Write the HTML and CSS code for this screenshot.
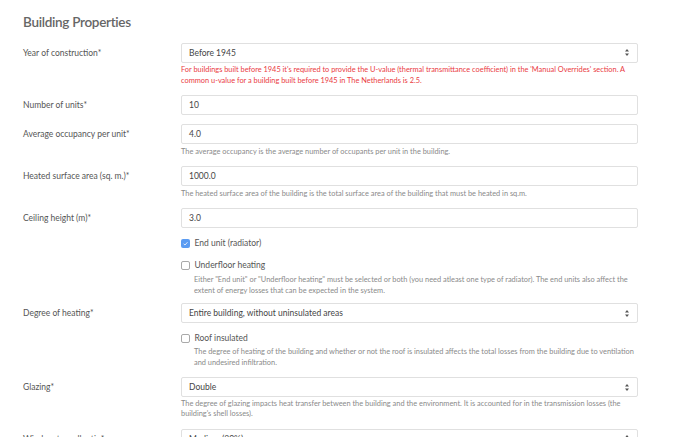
FILE: index.html
```html
<!DOCTYPE html>
<html lang="en">
<head>
<meta charset="utf-8">
<title>Building Properties</title>
<link rel="stylesheet" href="styles.css">
</head>
<body>
<main class="page">
  <h2 class="title">Building Properties</h2>

  <div class="row">
    <label class="label">Year of construction*</label>
    <div class="control">
      <div class="field select"><span>Before 1945</span><svg class="arrows" viewBox="0 0 4 7" width="4" height="7"><path d="M2 0 L4 2.6 L0 2.6 Z M2 7 L4 4.4 L0 4.4 Z"/></svg></div>
      <p class="help error">For buildings built before 1945 it's required to provide the U-value (thermal transmittance coefficient) in the 'Manual Overrides' section. A common u-value for a building built before 1945 in The Netherlands is 2.5.</p>
    </div>
  </div>

  <div class="row">
    <label class="label">Number of units*</label>
    <div class="control">
      <div class="field"><span>10</span></div>
    </div>
  </div>

  <div class="row">
    <label class="label">Average occupancy per unit*</label>
    <div class="control">
      <div class="field"><span>4.0</span></div>
      <p class="help">The average occupancy is the average number of occupants per unit in the building.</p>
    </div>
  </div>

  <div class="row">
    <label class="label">Heated surface area (sq. m.)*</label>
    <div class="control">
      <div class="field"><span>1000.0</span></div>
      <p class="help">The heated surface area of the building is the total surface area of the building that must be heated in sq.m.</p>
    </div>
  </div>

  <div class="row">
    <label class="label">Ceiling height (m)*</label>
    <div class="control">
      <div class="field"><span>3.0</span></div>
    </div>
  </div>

  <div class="row row-check">
    <span></span>
    <div class="control">
      <div class="check"><span class="box checked"><svg viewBox="0 0 9 9" width="9" height="9"><path d="M2.6 4.8 L4 6 L6.5 3.2" fill="none" stroke="#dfeafc" stroke-width="1"/></svg></span><span>End unit (radiator)</span></div>
    </div>
  </div>

  <div class="row row-tight">
    <span></span>
    <div class="control">
      <div class="check"><span class="box"></span><span>Underfloor heating</span></div>
      <p class="help indent help-check">Either "End unit" or "Underfloor heating" must be selected or both (you need atleast one type of radiator). The end units also affect the extent of energy losses that can be expected in the system.</p>
    </div>
  </div>

  <div class="row">
    <label class="label">Degree of heating*</label>
    <div class="control">
      <div class="field select"><span>Entire building, without uninsulated areas</span><svg class="arrows" viewBox="0 0 4 7" width="4" height="7"><path d="M2 0 L4 2.6 L0 2.6 Z M2 7 L4 4.4 L0 4.4 Z"/></svg></div>
    </div>
  </div>

  <div class="row">
    <span></span>
    <div class="control">
      <div class="check"><span class="box"></span><span>Roof insulated</span></div>
      <p class="help indent help-roof">The degree of heating of the building and whether or not the roof is insulated affects the total losses from the building due to ventilation and undesired infiltration.</p>
    </div>
  </div>

  <div class="row">
    <label class="label">Glazing*</label>
    <div class="control">
      <div class="field select"><span>Double</span><svg class="arrows" viewBox="0 0 4 7" width="4" height="7"><path d="M2 0 L4 2.6 L0 2.6 Z M2 7 L4 4.4 L0 4.4 Z"/></svg></div>
      <p class="help help-glazing">The degree of glazing impacts heat transfer between the building and the environment. It is accounted for in the transmission losses (the building's shell losses).</p>
    </div>
  </div>

  <div class="row">
    <label class="label">Window to wall ratio*</label>
    <div class="control">
      <div class="field select"><span>Medium (30%)</span><svg class="arrows" viewBox="0 0 4 7" width="4" height="7"><path d="M2 0 L4 2.6 L0 2.6 Z M2 7 L4 4.4 L0 4.4 Z"/></svg></div>
    </div>
  </div>
</main>
</body>
</html>
```

FILE: styles.css
```css
html, body {
  margin: 0;
  padding: 0;
  background: #ffffff;
}

body {
  font-family: Lato, "Noto Sans", "Liberation Sans", sans-serif;
  color: #555555;
  height: 437px;
  overflow: hidden;
}

.page {
  padding: 14px 62px 0 23px;
}

.title {
  margin: 0 0 11.5px;
  font-size: 13.5px;
  line-height: 17px;
  font-weight: 600;
  letter-spacing: -0.3px;
  color: #666666;
}

.row {
  display: grid;
  grid-template-columns: 158px 1fr;
  margin-bottom: 9px;
}

.row-check {
  margin-top: 1px;
}

.row-tight {
  margin-bottom: 7px;
}

.label {
  font-size: 8.5px;
  line-height: 20px;
  color: #555555;
}

.control {
  min-width: 0;
}

.field {
  box-sizing: border-box;
  height: 20px;
  border: 1px solid #e0e0e0;
  border-radius: 2px;
  padding: 0 7px;
  display: flex;
  align-items: center;
  justify-content: space-between;
  font-size: 8.5px;
  color: #454545;
  background: #ffffff;
}

.arrows {
  fill: #555555;
  margin-right: 1px;
}

.help {
  margin: 2.5px 0 0;
  font-size: 7.4px;
  line-height: 10.5px;
  color: #8a8a8a;
}

.error {
  color: #ea3a3f;
}

.indent {
  padding-left: 13px;
}

.help-check {
  margin-top: 3px;
}

.help-roof {
  margin-top: 2px;
}

.help-glazing {
  margin-top: 1.5px;
}

.check {
  display: flex;
  align-items: center;
  gap: 4.5px;
  font-size: 8.5px;
  line-height: 13px;
  color: #555555;
}

.box {
  box-sizing: border-box;
  width: 9px;
  height: 9px;
  border: 1px solid #a9a9a9;
  border-radius: 2px;
  display: inline-flex;
}

.box.checked {
  border: none;
  background: #5b9cf2;
}
```
